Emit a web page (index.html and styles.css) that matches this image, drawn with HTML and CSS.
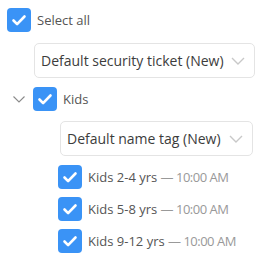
FILE: index.html
```html
<!DOCTYPE html>
<html lang="en">
<head>
  <meta charset="UTF-8">
  <meta name="viewport" content="width=device-width, initial-scale=1.0">
  <title>Tickets</title>
  <link rel="stylesheet" href="styles.css">
</head>
<body>
<div class="tree">
  <div class="row">
    <span class="check"><svg viewBox="0 0 24 24" width="24" height="24"><path d="M6.5 12.5l3.6 3.6 7.4-7.6" fill="none" stroke="#fff" stroke-width="2.6" stroke-linecap="round" stroke-linejoin="round"/></svg></span>
    <span class="label">Select all</span>
  </div>
  <div class="select select-top">
    <span>Default security ticket (New)</span>
    <svg class="caret" viewBox="0 0 14 8" width="14" height="8"><path d="M1 1l6 6 6-6" fill="none" stroke="#c8c8c8" stroke-width="1.4"/></svg>
  </div>

  <div class="row group">
    <svg class="toggle" viewBox="0 0 12 7" width="12" height="7"><path d="M0.5 0.5l5.5 5.5 5.5-5.5" fill="none" stroke="#8a8a8a" stroke-width="1.1"/></svg>
    <span class="check"><svg viewBox="0 0 24 24" width="24" height="24"><path d="M6.5 12.5l3.6 3.6 7.4-7.6" fill="none" stroke="#fff" stroke-width="2.6" stroke-linecap="round" stroke-linejoin="round"/></svg></span>
    <span class="label">Kids</span>
  </div>
  <div class="select select-group">
    <span>Default name tag (New)</span>
    <svg class="caret" viewBox="0 0 14 8" width="14" height="8"><path d="M1 1l6 6 6-6" fill="none" stroke="#c8c8c8" stroke-width="1.4"/></svg>
  </div>

  <div class="children">
    <div class="row">
      <span class="check"><svg viewBox="0 0 24 24" width="24" height="24"><path d="M6.5 12.5l3.6 3.6 7.4-7.6" fill="none" stroke="#fff" stroke-width="2.6" stroke-linecap="round" stroke-linejoin="round"/></svg></span>
      <span class="label">Kids 2-4 yrs <span class="time">&mdash; 10:00 AM</span></span>
    </div>
    <div class="row">
      <span class="check"><svg viewBox="0 0 24 24" width="24" height="24"><path d="M6.5 12.5l3.6 3.6 7.4-7.6" fill="none" stroke="#fff" stroke-width="2.6" stroke-linecap="round" stroke-linejoin="round"/></svg></span>
      <span class="label">Kids 5-8 yrs <span class="time">&mdash; 10:00 AM</span></span>
    </div>
    <div class="row">
      <span class="check"><svg viewBox="0 0 24 24" width="24" height="24"><path d="M6.5 12.5l3.6 3.6 7.4-7.6" fill="none" stroke="#fff" stroke-width="2.6" stroke-linecap="round" stroke-linejoin="round"/></svg></span>
      <span class="label">Kids 9-12 yrs <span class="time">&mdash; 10:00 AM</span></span>
    </div>
  </div>
</div>
</body>
</html>
```

FILE: styles.css
```css
body {
  margin: 0;
  padding: 0;
  font-family: "Open Sans", Arial, sans-serif;
  background-color: #fff;
  color: #555;
}

.tree {
  padding: 8px 6px 0 7px;
}

.row {
  display: flex;
  align-items: center;
  height: 24px;
}

.check {
  width: 24px;
  height: 24px;
  border-radius: 4px;
  background-color: #3a93f6; /* blue */
  display: flex;
  flex-shrink: 0;
}

.label {
  margin-left: 6px;
  font-size: 13px;
  color: #555;
  white-space: nowrap;
}

.time {
  color: #999;
  letter-spacing: -0.5px;
}

.select {
  display: flex;
  align-items: center;
  justify-content: space-between;
  border: 1px solid #e4e4e4;
  border-radius: 5px;
  padding: 0 9px 0 6px;
  font-size: 14px;
  color: #3c3c3c;
  box-sizing: border-box;
  height: 35px;
}

.select-top {
  margin: 11px 0 0 27px;
}

.group {
  margin-top: 9px;
}

.toggle {
  margin: 0 8px 0 6px;
}

.select-group {
  margin: 10px 2px 0 53px;
}

.children {
  margin: 9px 0 0 51px;
  display: flex;
  flex-direction: column;
  gap: 8px;
}
```
